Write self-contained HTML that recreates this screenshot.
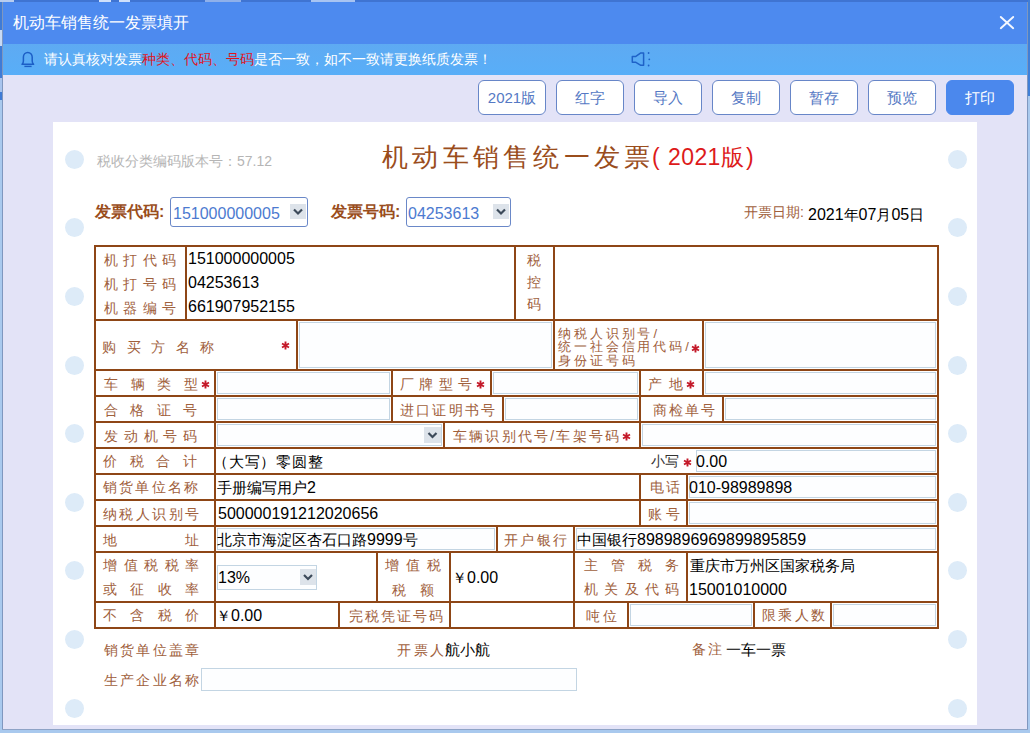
<!DOCTYPE html><html><head><meta charset="utf-8"><style>
html,body{margin:0;padding:0;width:1030px;height:733px;overflow:hidden;background:#a9c9ee;font-family:"Liberation Sans",sans-serif}
.lab{position:absolute;display:flex;justify-content:space-between;white-space:nowrap}
.star{position:absolute;width:12px;height:16px;line-height:20px;font-size:16px;font-weight:bold;color:#d0202a;text-align:center;font-family:"Liberation Mono",monospace}
.btn{position:absolute;top:80px;width:66px;height:33px;border:1px solid #6786c8;border-radius:6px;background:#fff;color:#5579c4;font-size:15px;line-height:33px;text-align:center}
</style></head><body>
<div style="position:absolute;left:0px;top:0px;width:1030px;height:2px;background:#3f74d2"></div>
<div style="position:absolute;left:0px;top:0px;width:3px;height:100px;background:#3f7bd6"></div>
<div style="position:absolute;left:1028px;top:0px;width:2px;height:96px;background:#3f7fd8"></div>
<div style="position:absolute;left:0px;top:30px;width:2px;height:16px;background:#c8daf4"></div>
<div style="position:absolute;left:0px;top:78px;width:2px;height:14px;background:#a8c4ee"></div>
<div style="position:absolute;left:0px;top:0px;width:14px;height:2px;background:#b8cdf0"></div>
<div style="position:absolute;left:99px;top:0px;width:12px;height:2px;background:#cfe0fb"></div>
<div style="position:absolute;left:119px;top:0px;width:11px;height:2px;background:#cfe0fb"></div>
<div style="position:absolute;left:205px;top:0px;width:36px;height:2px;background:#8fb0ea"></div>
<div style="position:absolute;left:311px;top:0px;width:44px;height:2px;background:#a8c4f2"></div>
<div style="position:absolute;left:3px;top:2px;width:1024px;height:727px;background:#e3e3f7"></div>
<div style="position:absolute;left:2px;top:2px;width:1px;height:728px;background:#7f97bf"></div>
<div style="position:absolute;left:1027px;top:2px;width:1px;height:728px;background:#7f97bf"></div>
<div style="position:absolute;left:2px;top:729px;width:1026px;height:1px;background:#8ea3c6"></div>
<div style="position:absolute;left:3px;top:2px;width:1024px;height:42px;background:#4d8aef"></div>
<div style="position:absolute;left:13px;top:12.0px;height:22px;line-height:22px;font-size:16px;color:#fff;white-space:nowrap;">机动车销售统一发票填开</div>
<svg style="position:absolute;left:999px;top:14px" width="16" height="16"><path d="M1.8 3 L14.2 14.2 M14.2 3 L1.8 14.2" stroke="#f4f8ff" stroke-width="1.9" fill="none" stroke-linecap="round"/></svg>
<div style="position:absolute;left:3px;top:44px;width:1024px;height:31px;background:linear-gradient(#5eaaf2,#58aef8);border-bottom:0"></div>
<svg style="position:absolute;left:14px;top:46px" width="30" height="26"><path d="M8 18.3 Q9.4 17.2 9.4 15 L9.4 11 A4.4 4.6 0 0 1 18.2 11 L18.2 15 Q18.2 17.2 19.6 18.3 Z" stroke="#1c5ec6" stroke-width="1.5" fill="none" stroke-linejoin="round"/><path d="M10.4 20.4 L17.6 20.4" stroke="#1c5ec6" stroke-width="1.4"/></svg>
<div style="position:absolute;left:44px;top:49.0px;height:20px;line-height:20px;font-size:14px;color:#fff;white-space:nowrap;">请认真核对发票<span style="color:#e0141e">种类、代码、号码</span>是否一致，如不一致请更换纸质发票！</div>
<svg style="position:absolute;left:625px;top:46px" width="35" height="26"><path d="M7.3 10.6 L10.5 10.6 L15.8 6.9 L18.6 6.9 L18.6 19.3 L15.8 19.3 L10.5 16.2 L7.3 16.2 Z" stroke="#1f62c8" stroke-width="1.5" fill="none" stroke-linejoin="round"/><circle cx="23.6" cy="7" r="0.9" fill="#1f62c8"/><circle cx="24.3" cy="13.3" r="0.9" fill="#1f62c8"/><circle cx="23.6" cy="19.5" r="0.9" fill="#1f62c8"/></svg>
<div class="btn" style="left:478px">2021版</div>
<div class="btn" style="left:556px">红字</div>
<div class="btn" style="left:634px">导入</div>
<div class="btn" style="left:712px">复制</div>
<div class="btn" style="left:790px">暂存</div>
<div class="btn" style="left:868px">预览</div>
<div class="btn" style="left:946px;background:#4b88ed;border-color:#4b88ed;color:#fff">打印</div>
<div style="position:absolute;left:53px;top:122px;width:924px;height:603px;background:#fff"></div>
<div style="position:absolute;left:65.0px;top:149.8px;width:19px;height:19px;border-radius:50%;background:#ddebf8"></div>
<div style="position:absolute;left:948.0px;top:149.8px;width:19px;height:19px;border-radius:50%;background:#ddebf8"></div>
<div style="position:absolute;left:65.0px;top:218.4px;width:19px;height:19px;border-radius:50%;background:#ddebf8"></div>
<div style="position:absolute;left:948.0px;top:218.4px;width:19px;height:19px;border-radius:50%;background:#ddebf8"></div>
<div style="position:absolute;left:65.0px;top:287.0px;width:19px;height:19px;border-radius:50%;background:#ddebf8"></div>
<div style="position:absolute;left:948.0px;top:287.0px;width:19px;height:19px;border-radius:50%;background:#ddebf8"></div>
<div style="position:absolute;left:65.0px;top:355.6px;width:19px;height:19px;border-radius:50%;background:#ddebf8"></div>
<div style="position:absolute;left:948.0px;top:355.6px;width:19px;height:19px;border-radius:50%;background:#ddebf8"></div>
<div style="position:absolute;left:65.0px;top:424.2px;width:19px;height:19px;border-radius:50%;background:#ddebf8"></div>
<div style="position:absolute;left:948.0px;top:424.2px;width:19px;height:19px;border-radius:50%;background:#ddebf8"></div>
<div style="position:absolute;left:65.0px;top:492.8px;width:19px;height:19px;border-radius:50%;background:#ddebf8"></div>
<div style="position:absolute;left:948.0px;top:492.8px;width:19px;height:19px;border-radius:50%;background:#ddebf8"></div>
<div style="position:absolute;left:65.0px;top:561.4px;width:19px;height:19px;border-radius:50%;background:#ddebf8"></div>
<div style="position:absolute;left:948.0px;top:561.4px;width:19px;height:19px;border-radius:50%;background:#ddebf8"></div>
<div style="position:absolute;left:65.0px;top:630.0px;width:19px;height:19px;border-radius:50%;background:#ddebf8"></div>
<div style="position:absolute;left:948.0px;top:630.0px;width:19px;height:19px;border-radius:50%;background:#ddebf8"></div>
<div style="position:absolute;left:65.0px;top:698.6px;width:19px;height:19px;border-radius:50%;background:#ddebf8"></div>
<div style="position:absolute;left:948.0px;top:698.6px;width:19px;height:19px;border-radius:50%;background:#ddebf8"></div>
<div style="position:absolute;left:97px;top:151.0px;height:20px;line-height:20px;font-size:14px;color:#b5b5b5;white-space:nowrap;">税收分类编码版本号：57.12</div>
<div style="position:absolute;left:382px;top:140.0px;height:34px;line-height:34px;font-size:26px;color:#9a4d1c;white-space:nowrap;letter-spacing:4.3px">机动车销售统一发票</div>
<div style="position:absolute;left:652px;top:140.0px;height:34px;line-height:34px;font-size:23px;color:#dd1a1a;white-space:nowrap;">(</div>
<div style="position:absolute;left:668px;top:140.0px;height:34px;line-height:34px;font-size:23px;color:#dd1a1a;white-space:nowrap;letter-spacing:0.4px">2021版</div>
<div style="position:absolute;left:746px;top:140.0px;height:34px;line-height:34px;font-size:23px;color:#dd1a1a;white-space:nowrap;">)</div>
<div style="position:absolute;left:95px;top:201.0px;height:22px;line-height:22px;font-size:16px;color:#9a4d1c;white-space:nowrap;font-weight:bold">发票代码:</div>
<div style="position:absolute;left:170px;top:197px;width:136px;height:28px;border:1px solid #6a88c8;border-radius:3px;background:#fff"></div>
<div style="position:absolute;left:173px;top:202.5px;height:21px;line-height:21px;font-size:15px;color:#4c7ad0;white-space:nowrap;"><span style="font-size:16px">151000000005</span></div>
<div style="position:absolute;left:290px;top:204px;width:16px;height:15px;background:#dde3ea"><svg width="16" height="15" style="position:absolute;left:0;top:0"><path d="M4.0 5.5 L8.0 9.5 L12.0 5.5" stroke="#3c4a5a" stroke-width="2.2" fill="none"/></svg></div>
<div style="position:absolute;left:331px;top:201.0px;height:22px;line-height:22px;font-size:16px;color:#9a4d1c;white-space:nowrap;font-weight:bold">发票号码:</div>
<div style="position:absolute;left:406px;top:197px;width:103px;height:28px;border:1px solid #6a88c8;border-radius:3px;background:#fff"></div>
<div style="position:absolute;left:408px;top:202.5px;height:21px;line-height:21px;font-size:15px;color:#4c7ad0;white-space:nowrap;"><span style="font-size:16px">04253613</span></div>
<div style="position:absolute;left:493px;top:204px;width:16px;height:15px;background:#dde3ea"><svg width="16" height="15" style="position:absolute;left:0;top:0"><path d="M4.0 5.5 L8.0 9.5 L12.0 5.5" stroke="#3c4a5a" stroke-width="2.2" fill="none"/></svg></div>
<div style="position:absolute;left:744px;top:202.0px;height:20px;line-height:20px;font-size:14px;color:#a0603c;white-space:nowrap;">开票日期:</div>
<div style="position:absolute;left:808px;top:203.5px;height:21px;line-height:21px;font-size:15px;color:#000;white-space:nowrap;"><span style="font-size:16px">2021</span>年<span style="font-size:16px">07</span>月<span style="font-size:16px">05</span>日</div>
<div style="position:absolute;left:94px;top:245px;width:845px;height:2px;background:#8e4616"></div>
<div style="position:absolute;left:94px;top:319px;width:845px;height:2px;background:#8e4616"></div>
<div style="position:absolute;left:94px;top:369px;width:845px;height:2px;background:#8e4616"></div>
<div style="position:absolute;left:94px;top:395px;width:845px;height:2px;background:#8e4616"></div>
<div style="position:absolute;left:94px;top:421px;width:845px;height:2px;background:#8e4616"></div>
<div style="position:absolute;left:94px;top:447px;width:845px;height:2px;background:#8e4616"></div>
<div style="position:absolute;left:94px;top:473px;width:845px;height:2px;background:#8e4616"></div>
<div style="position:absolute;left:94px;top:499px;width:845px;height:2px;background:#8e4616"></div>
<div style="position:absolute;left:94px;top:525px;width:845px;height:2px;background:#8e4616"></div>
<div style="position:absolute;left:94px;top:551px;width:845px;height:2px;background:#8e4616"></div>
<div style="position:absolute;left:94px;top:601px;width:845px;height:2px;background:#8e4616"></div>
<div style="position:absolute;left:94px;top:627px;width:845px;height:2px;background:#8e4616"></div>
<div style="position:absolute;left:94px;top:245px;width:2px;height:384px;background:#8e4616"></div>
<div style="position:absolute;left:937px;top:245px;width:2px;height:384px;background:#8e4616"></div>
<div style="position:absolute;left:185px;top:245px;width:2px;height:76px;background:#8e4616"></div>
<div style="position:absolute;left:514px;top:245px;width:2px;height:76px;background:#8e4616"></div>
<div style="position:absolute;left:553px;top:245px;width:2px;height:76px;background:#8e4616"></div>
<div style="position:absolute;left:296px;top:319px;width:2px;height:52px;background:#8e4616"></div>
<div style="position:absolute;left:553px;top:319px;width:2px;height:52px;background:#8e4616"></div>
<div style="position:absolute;left:702px;top:319px;width:2px;height:52px;background:#8e4616"></div>
<div style="position:absolute;left:214px;top:369px;width:2px;height:260px;background:#8e4616"></div>
<div style="position:absolute;left:391px;top:369px;width:2px;height:54px;background:#8e4616"></div>
<div style="position:absolute;left:490px;top:369px;width:2px;height:28px;background:#8e4616"></div>
<div style="position:absolute;left:639px;top:369px;width:2px;height:28px;background:#8e4616"></div>
<div style="position:absolute;left:702px;top:369px;width:2px;height:28px;background:#8e4616"></div>
<div style="position:absolute;left:502px;top:395px;width:2px;height:28px;background:#8e4616"></div>
<div style="position:absolute;left:639px;top:395px;width:2px;height:28px;background:#8e4616"></div>
<div style="position:absolute;left:722px;top:395px;width:2px;height:28px;background:#8e4616"></div>
<div style="position:absolute;left:443px;top:421px;width:2px;height:28px;background:#8e4616"></div>
<div style="position:absolute;left:639px;top:421px;width:2px;height:28px;background:#8e4616"></div>
<div style="position:absolute;left:639px;top:473px;width:2px;height:54px;background:#8e4616"></div>
<div style="position:absolute;left:686px;top:473px;width:2px;height:54px;background:#8e4616"></div>
<div style="position:absolute;left:496px;top:525px;width:2px;height:28px;background:#8e4616"></div>
<div style="position:absolute;left:573px;top:525px;width:2px;height:28px;background:#8e4616"></div>
<div style="position:absolute;left:376px;top:551px;width:2px;height:52px;background:#8e4616"></div>
<div style="position:absolute;left:449px;top:551px;width:2px;height:78px;background:#8e4616"></div>
<div style="position:absolute;left:573px;top:551px;width:2px;height:78px;background:#8e4616"></div>
<div style="position:absolute;left:686px;top:551px;width:2px;height:52px;background:#8e4616"></div>
<div style="position:absolute;left:338px;top:601px;width:2px;height:28px;background:#8e4616"></div>
<div style="position:absolute;left:627px;top:601px;width:2px;height:28px;background:#8e4616"></div>
<div style="position:absolute;left:753px;top:601px;width:2px;height:28px;background:#8e4616"></div>
<div style="position:absolute;left:830px;top:601px;width:2px;height:28px;background:#8e4616"></div>
<div style="position:absolute;left:299px;top:322px;width:251px;height:44px;border:1px solid #c3d5e3;background:#fdfeff"></div>
<div style="position:absolute;left:705px;top:322px;width:229px;height:44px;border:1px solid #c3d5e3;background:#fdfeff"></div>
<div style="position:absolute;left:217px;top:372px;width:171px;height:20px;border:1px solid #c3d5e3;background:#fdfeff"></div>
<div style="position:absolute;left:493px;top:372px;width:143px;height:20px;border:1px solid #c3d5e3;background:#fdfeff"></div>
<div style="position:absolute;left:705px;top:372px;width:229px;height:20px;border:1px solid #c3d5e3;background:#fdfeff"></div>
<div style="position:absolute;left:217px;top:398px;width:171px;height:20px;border:1px solid #c3d5e3;background:#fdfeff"></div>
<div style="position:absolute;left:505px;top:398px;width:131px;height:20px;border:1px solid #c3d5e3;background:#fdfeff"></div>
<div style="position:absolute;left:725px;top:398px;width:209px;height:20px;border:1px solid #c3d5e3;background:#fdfeff"></div>
<div style="position:absolute;left:217px;top:424px;width:223px;height:20px;border:1px solid #c3d5e3;background:#fdfeff"></div>
<div style="position:absolute;left:424px;top:427px;width:17px;height:16px;background:#dde3ea"><svg width="17" height="16" style="position:absolute;left:0;top:0"><path d="M4.5 6.0 L8.5 10.0 L12.5 6.0" stroke="#3c4a5a" stroke-width="2.2" fill="none"/></svg></div>
<div style="position:absolute;left:642px;top:424px;width:292px;height:20px;border:1px solid #c3d5e3;background:#fdfeff"></div>
<div style="position:absolute;left:696px;top:450px;width:238px;height:20px;border:1px solid #c3d5e3;background:#fdfeff"></div>
<div style="position:absolute;left:689px;top:476px;width:245px;height:20px;border:1px solid #c3d5e3;background:#fdfeff"></div>
<div style="position:absolute;left:689px;top:502px;width:245px;height:20px;border:1px solid #c3d5e3;background:#fdfeff"></div>
<div style="position:absolute;left:217px;top:528px;width:276px;height:20px;border:1px solid #c3d5e3;background:#fdfeff"></div>
<div style="position:absolute;left:576px;top:528px;width:358px;height:20px;border:1px solid #c3d5e3;background:#fdfeff"></div>
<div style="position:absolute;left:217px;top:565px;width:98px;height:23px;border:1px solid #c3d5e3;background:#fdfeff"></div>
<div style="position:absolute;left:300px;top:569px;width:16px;height:16px;background:#dde3ea"><svg width="16" height="16" style="position:absolute;left:0;top:0"><path d="M4.0 6.0 L8.0 10.0 L12.0 6.0" stroke="#3c4a5a" stroke-width="2.2" fill="none"/></svg></div>
<div style="position:absolute;left:630px;top:604px;width:120px;height:20px;border:1px solid #c3d5e3;background:#fdfeff"></div>
<div style="position:absolute;left:833px;top:604px;width:101px;height:20px;border:1px solid #c3d5e3;background:#fdfeff"></div>
<div class="lab" style="left:104px;top:249.5px;width:72px;height:20px;line-height:20px;font-size:14px;color:#a0603c;"><span>机</span><span>打</span><span>代</span><span>码</span></div>
<div class="lab" style="left:104px;top:273.5px;width:72px;height:20px;line-height:20px;font-size:14px;color:#a0603c;"><span>机</span><span>打</span><span>号</span><span>码</span></div>
<div class="lab" style="left:104px;top:297.5px;width:72px;height:20px;line-height:20px;font-size:14px;color:#a0603c;"><span>机</span><span>器</span><span>编</span><span>号</span></div>
<div style="position:absolute;left:188px;top:248.0px;height:21px;line-height:21px;font-size:15px;color:#000;white-space:nowrap;"><span style="font-size:16px">151000000005</span></div>
<div style="position:absolute;left:188px;top:272.0px;height:21px;line-height:21px;font-size:15px;color:#000;white-space:nowrap;"><span style="font-size:16px">04253613</span></div>
<div style="position:absolute;left:188px;top:296.0px;height:21px;line-height:21px;font-size:15px;color:#000;white-space:nowrap;"><span style="font-size:16px">661907952155</span></div>
<div style="position:absolute;left:527px;top:250.0px;height:20px;line-height:20px;font-size:14px;color:#a0603c;white-space:nowrap;">税</div>
<div style="position:absolute;left:527px;top:272.2px;height:20px;line-height:20px;font-size:14px;color:#a0603c;white-space:nowrap;">控</div>
<div style="position:absolute;left:527px;top:294.4px;height:20px;line-height:20px;font-size:14px;color:#a0603c;white-space:nowrap;">码</div>
<div class="lab" style="left:102px;top:336.5px;width:112px;height:20px;line-height:20px;font-size:14px;color:#a0603c;"><span>购</span><span>买</span><span>方</span><span>名</span><span>称</span></div>
<svg style="position:absolute;left:280.5px;top:341.0px" width="9" height="9"><path d="M4.5 0.6 L4.5 8.4 M1 2.5 L8 6.5 M1 6.5 L8 2.5" stroke="#c41a2a" stroke-width="1.9" fill="none"/></svg>
<div style="position:absolute;left:558px;top:326.7px;height:14px;line-height:14px;font-size:13px;color:#a0603c;white-space:nowrap;letter-spacing:2.9px">纳税人识别号/</div>
<div style="position:absolute;left:558px;top:340.3px;height:14px;line-height:14px;font-size:13px;color:#a0603c;white-space:nowrap;letter-spacing:2.9px">统一社会信用代码/</div>
<div style="position:absolute;left:558px;top:353.8px;height:14px;line-height:14px;font-size:13px;color:#a0603c;white-space:nowrap;letter-spacing:2.9px">身份证号码</div>
<svg style="position:absolute;left:690.5px;top:343.5px" width="9" height="9"><path d="M4.5 0.6 L4.5 8.4 M1 2.5 L8 6.5 M1 6.5 L8 2.5" stroke="#c41a2a" stroke-width="1.9" fill="none"/></svg>
<div class="lab" style="left:104px;top:373.8px;width:94px;height:20px;line-height:20px;font-size:14px;color:#a0603c;"><span>车</span><span>辆</span><span>类</span><span>型</span></div>
<svg style="position:absolute;left:200.5px;top:379.5px" width="9" height="9"><path d="M4.5 0.6 L4.5 8.4 M1 2.5 L8 6.5 M1 6.5 L8 2.5" stroke="#c41a2a" stroke-width="1.9" fill="none"/></svg>
<div class="lab" style="left:400px;top:373.5px;width:72px;height:20px;line-height:20px;font-size:14px;color:#a0603c;"><span>厂</span><span>牌</span><span>型</span><span>号</span></div>
<svg style="position:absolute;left:475.5px;top:379.5px" width="9" height="9"><path d="M4.5 0.6 L4.5 8.4 M1 2.5 L8 6.5 M1 6.5 L8 2.5" stroke="#c41a2a" stroke-width="1.9" fill="none"/></svg>
<div class="lab" style="left:648px;top:374.0px;width:35px;height:20px;line-height:20px;font-size:14px;color:#a0603c;"><span>产</span><span>地</span></div>
<svg style="position:absolute;left:685.5px;top:379.5px" width="9" height="9"><path d="M4.5 0.6 L4.5 8.4 M1 2.5 L8 6.5 M1 6.5 L8 2.5" stroke="#c41a2a" stroke-width="1.9" fill="none"/></svg>
<div class="lab" style="left:104px;top:399.5px;width:93px;height:20px;line-height:20px;font-size:14px;color:#a0603c;"><span>合</span><span>格</span><span>证</span><span>号</span></div>
<div class="lab" style="left:400px;top:399.5px;width:95px;height:20px;line-height:20px;font-size:14px;color:#a0603c;"><span>进</span><span>口</span><span>证</span><span>明</span><span>书</span><span>号</span></div>
<div class="lab" style="left:653px;top:399.5px;width:62px;height:20px;line-height:20px;font-size:14px;color:#a0603c;"><span>商</span><span>检</span><span>单</span><span>号</span></div>
<div class="lab" style="left:104px;top:425.5px;width:93px;height:20px;line-height:20px;font-size:14px;color:#a0603c;"><span>发</span><span>动</span><span>机</span><span>号</span><span>码</span></div>
<div class="lab" style="left:453px;top:425.5px;width:166px;height:20px;line-height:20px;font-size:14px;color:#a0603c;"><span>车</span><span>辆</span><span>识</span><span>别</span><span>代</span><span>号</span><span>/</span><span>车</span><span>架</span><span>号</span><span>码</span></div>
<svg style="position:absolute;left:621.5px;top:431.5px" width="9" height="9"><path d="M4.5 0.6 L4.5 8.4 M1 2.5 L8 6.5 M1 6.5 L8 2.5" stroke="#c41a2a" stroke-width="1.9" fill="none"/></svg>
<div class="lab" style="left:103px;top:450.8px;width:94px;height:20px;line-height:20px;font-size:14px;color:#a0603c;"><span>价</span><span>税</span><span>合</span><span>计</span></div>
<div style="position:absolute;left:213px;top:450.5px;height:21px;line-height:21px;font-size:15px;color:#000;white-space:nowrap;letter-spacing:0.8px">（大写）零圆整</div>
<div style="position:absolute;left:651px;top:451.0px;height:20px;line-height:20px;font-size:14px;color:#333;white-space:nowrap;">小写</div>
<svg style="position:absolute;left:682.5px;top:457.5px" width="9" height="9"><path d="M4.5 0.6 L4.5 8.4 M1 2.5 L8 6.5 M1 6.5 L8 2.5" stroke="#c41a2a" stroke-width="1.9" fill="none"/></svg>
<div style="position:absolute;left:696px;top:450.5px;height:21px;line-height:21px;font-size:15px;color:#000;white-space:nowrap;"><span style="font-size:16px">0.00</span></div>
<div class="lab" style="left:103px;top:477.3px;width:95px;height:20px;line-height:20px;font-size:14px;color:#a0603c;"><span>销</span><span>货</span><span>单</span><span>位</span><span>名</span><span>称</span></div>
<div style="position:absolute;left:217px;top:476.5px;height:21px;line-height:21px;font-size:15px;color:#000;white-space:nowrap;">手册编写用户<span style="font-size:16px">2</span></div>
<div class="lab" style="left:650px;top:477.0px;width:30px;height:20px;line-height:20px;font-size:14px;color:#a0603c;"><span>电</span><span>话</span></div>
<div style="position:absolute;left:689px;top:476.5px;height:21px;line-height:21px;font-size:15px;color:#000;white-space:nowrap;"><span style="font-size:16px">010-98989898</span></div>
<div class="lab" style="left:103px;top:504.4px;width:96px;height:20px;line-height:20px;font-size:14px;color:#a0603c;"><span>纳</span><span>税</span><span>人</span><span>识</span><span>别</span><span>号</span></div>
<div style="position:absolute;left:218px;top:502.5px;height:21px;line-height:21px;font-size:15px;color:#000;white-space:nowrap;"><span style="font-size:16px">500000191212020656</span></div>
<div class="lab" style="left:648px;top:504.0px;width:32px;height:20px;line-height:20px;font-size:14px;color:#a0603c;"><span>账</span><span>号</span></div>
<div class="lab" style="left:103px;top:529.6px;width:96px;height:20px;line-height:20px;font-size:14px;color:#a0603c;"><span>地</span><span>址</span></div>
<div style="position:absolute;left:217px;top:528.5px;height:21px;line-height:21px;font-size:15px;color:#000;white-space:nowrap;">北京市海淀区杏石口路<span style="font-size:16px">9999</span>号</div>
<div class="lab" style="left:504px;top:529.5px;width:63px;height:20px;line-height:20px;font-size:14px;color:#a0603c;"><span>开</span><span>户</span><span>银</span><span>行</span></div>
<div style="position:absolute;left:577px;top:528.5px;height:21px;line-height:21px;font-size:15px;color:#000;white-space:nowrap;">中国银行<span style="font-size:16px">8989896969899895859</span></div>
<div class="lab" style="left:103px;top:555.4px;width:96px;height:20px;line-height:20px;font-size:14px;color:#a0603c;"><span>增</span><span>值</span><span>税</span><span>税</span><span>率</span></div>
<div class="lab" style="left:103px;top:579.3px;width:96px;height:20px;line-height:20px;font-size:14px;color:#a0603c;"><span>或</span><span>征</span><span>收</span><span>率</span></div>
<div style="position:absolute;left:218px;top:566.5px;height:21px;line-height:21px;font-size:15px;color:#000;white-space:nowrap;"><span style="font-size:16px">13%</span></div>
<div class="lab" style="left:385px;top:555.4px;width:56px;height:20px;line-height:20px;font-size:14px;color:#a0603c;"><span>增</span><span>值</span><span>税</span></div>
<div class="lab" style="left:392px;top:579.6px;width:42px;height:20px;line-height:20px;font-size:14px;color:#a0603c;"><span>税</span><span>额</span></div>
<div style="position:absolute;left:452px;top:566.5px;height:21px;line-height:21px;font-size:15px;color:#000;white-space:nowrap;">￥<span style="font-size:16px">0.00</span></div>
<div class="lab" style="left:584px;top:555.4px;width:95px;height:20px;line-height:20px;font-size:14px;color:#a0603c;"><span>主</span><span>管</span><span>税</span><span>务</span></div>
<div class="lab" style="left:584px;top:579.3px;width:95px;height:20px;line-height:20px;font-size:14px;color:#a0603c;"><span>机</span><span>关</span><span>及</span><span>代</span><span>码</span></div>
<div style="position:absolute;left:690px;top:554.5px;height:21px;line-height:21px;font-size:15px;color:#000;white-space:nowrap;">重庆市万州区国家税务局</div>
<div style="position:absolute;left:689px;top:578.5px;height:21px;line-height:21px;font-size:15px;color:#000;white-space:nowrap;"><span style="font-size:16px">15001010000</span></div>
<div class="lab" style="left:103px;top:605.0px;width:96px;height:20px;line-height:20px;font-size:14px;color:#a0603c;"><span>不</span><span>含</span><span>税</span><span>价</span></div>
<div style="position:absolute;left:216px;top:604.5px;height:21px;line-height:21px;font-size:15px;color:#000;white-space:nowrap;">￥<span style="font-size:16px">0.00</span></div>
<div class="lab" style="left:349px;top:605.8px;width:94px;height:20px;line-height:20px;font-size:14px;color:#a0603c;"><span>完</span><span>税</span><span>凭</span><span>证</span><span>号</span><span>码</span></div>
<div class="lab" style="left:586px;top:605.5px;width:31px;height:20px;line-height:20px;font-size:14px;color:#a0603c;"><span>吨</span><span>位</span></div>
<div class="lab" style="left:762px;top:605.3px;width:63px;height:20px;line-height:20px;font-size:14px;color:#a0603c;"><span>限</span><span>乘</span><span>人</span><span>数</span></div>
<div class="lab" style="left:104px;top:639.5px;width:95px;height:20px;line-height:20px;font-size:14px;color:#a0603c;"><span>销</span><span>货</span><span>单</span><span>位</span><span>盖</span><span>章</span></div>
<div class="lab" style="left:397px;top:639.6px;width:47px;height:20px;line-height:20px;font-size:14px;color:#a0603c;"><span>开</span><span>票</span><span>人</span></div>
<div style="position:absolute;left:445px;top:639.0px;height:21px;line-height:21px;font-size:15px;color:#000;white-space:nowrap;">航小航</div>
<div class="lab" style="left:692px;top:639.2px;width:30px;height:20px;line-height:20px;font-size:14px;color:#a0603c;"><span>备</span><span>注</span></div>
<div style="position:absolute;left:726px;top:639.0px;height:21px;line-height:21px;font-size:15px;color:#000;white-space:nowrap;">一车一票</div>
<div class="lab" style="left:104px;top:669.8px;width:95px;height:20px;line-height:20px;font-size:14px;color:#a0603c;"><span>生</span><span>产</span><span>企</span><span>业</span><span>名</span><span>称</span></div>
<div style="position:absolute;left:201px;top:668px;width:374px;height:21px;border:1px solid #c3d5e3;background:#fdfeff"></div>
</body></html>
